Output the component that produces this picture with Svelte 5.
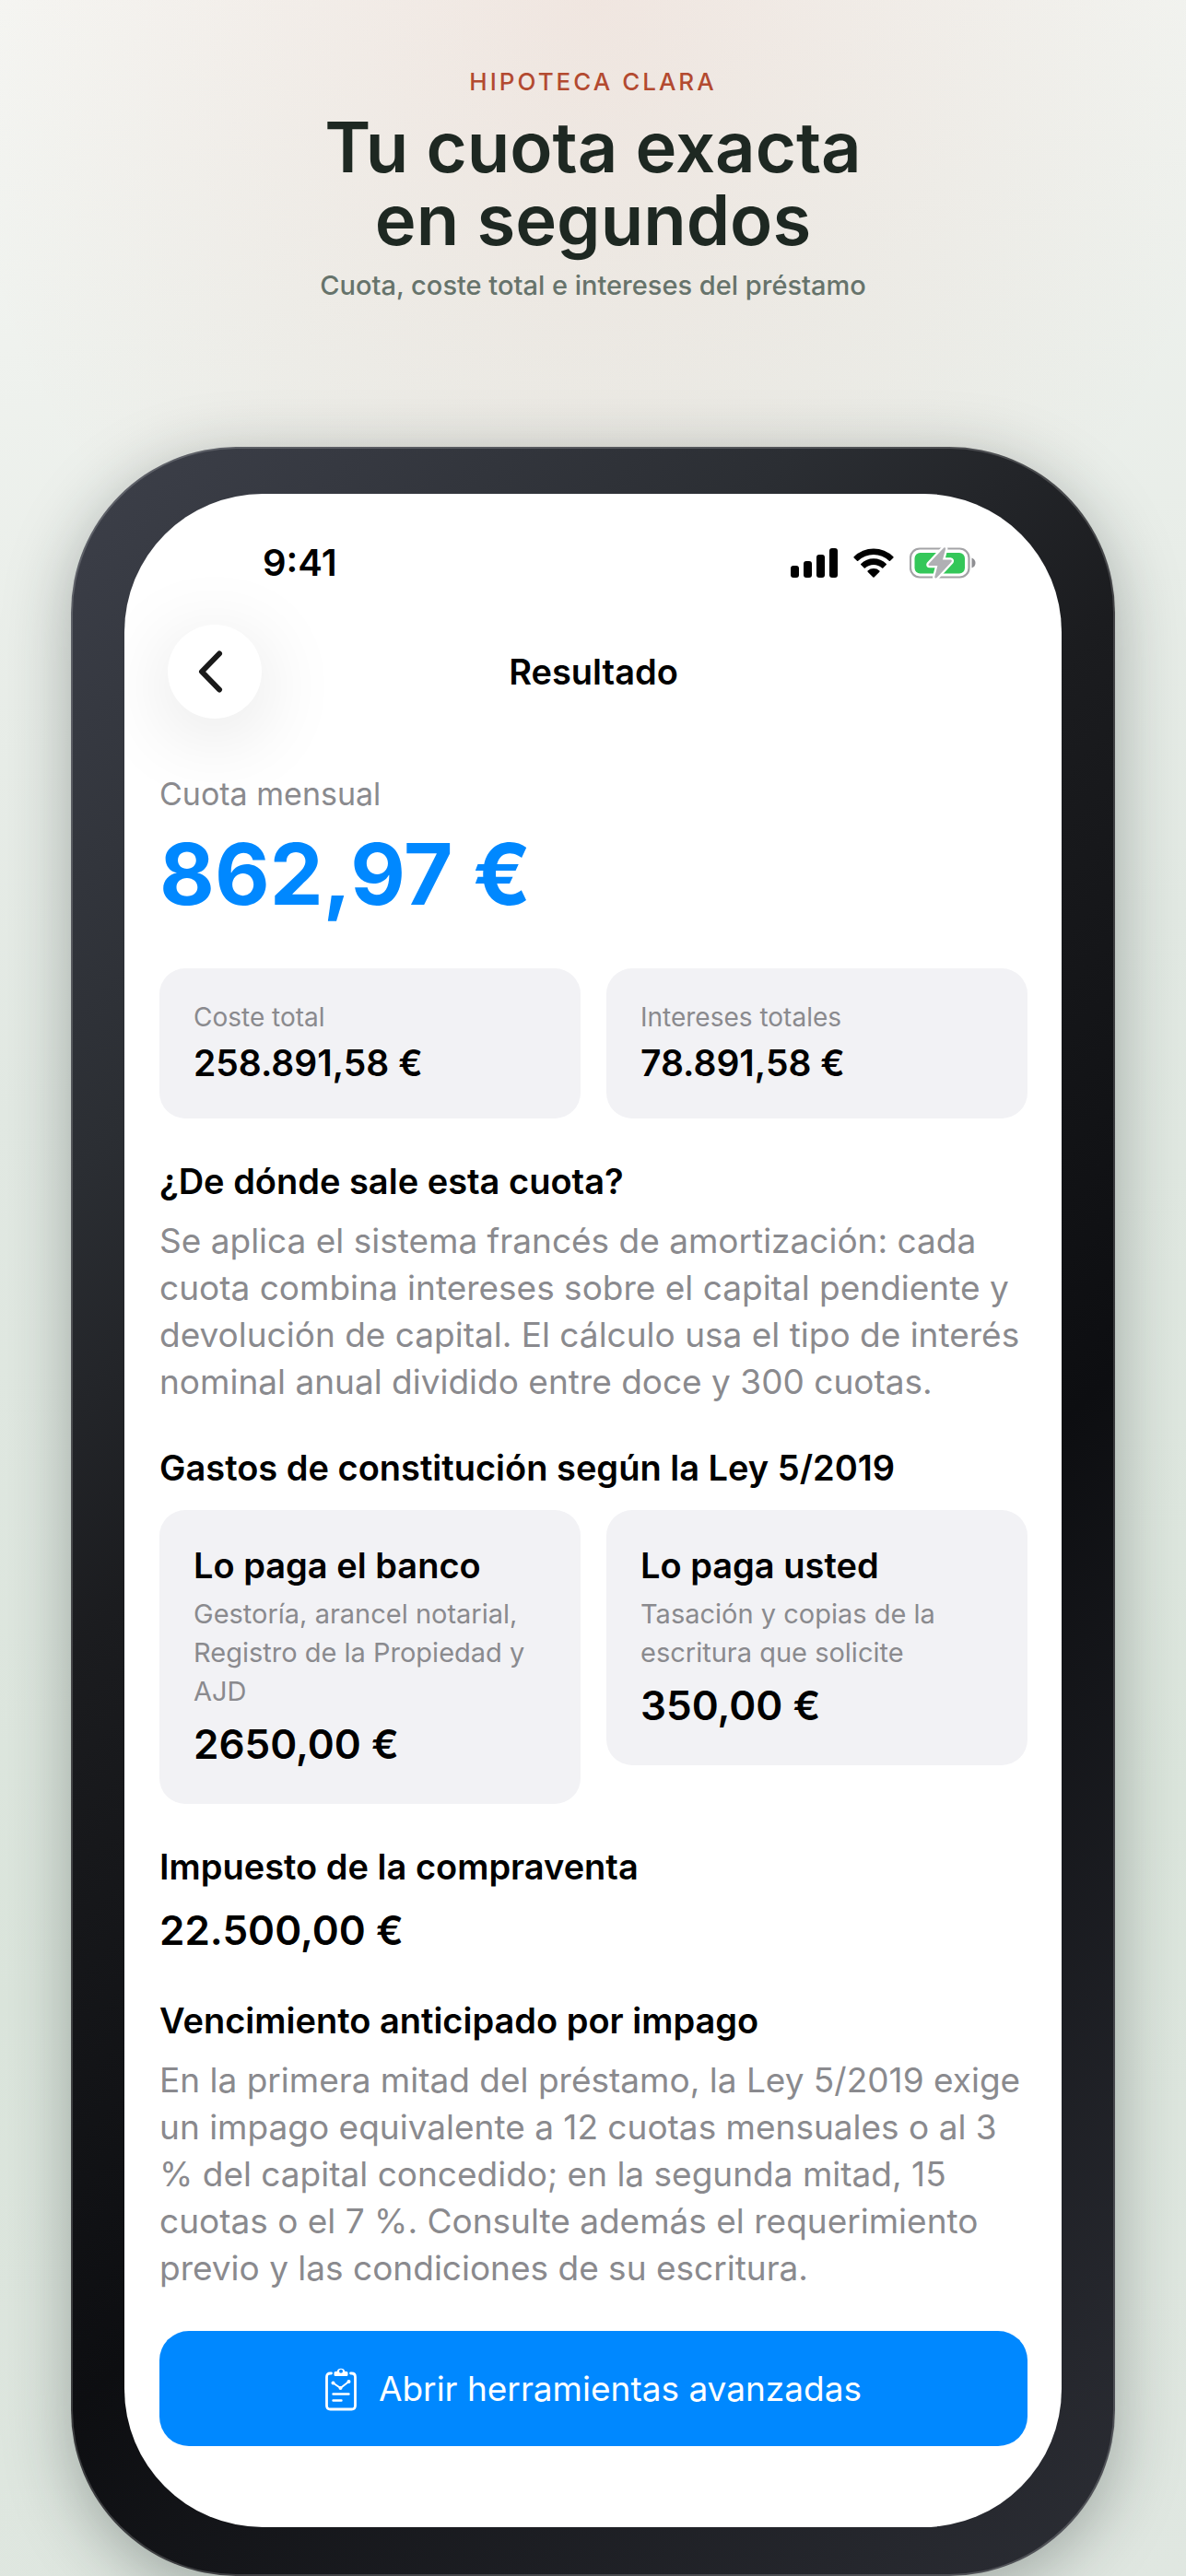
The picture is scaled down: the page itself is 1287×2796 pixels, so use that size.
<script>
  const totals = [
    { label: 'Coste total', value: '258.891,58 €' },
    { label: 'Intereses totales', value: '78.891,58 €' },
  ];
  const costs = [
    {
      title: 'Lo paga el banco',
      detail: 'Gestoría, arancel notarial, Registro de la Propiedad y AJD',
      value: '2650,00 €',
    },
    {
      title: 'Lo paga usted',
      detail: 'Tasación y copias de la escritura que solicite',
      value: '350,00 €',
    },
  ];
</script>

<div class="page">
  <header class="intro">
    <p class="eyebrow">HIPOTECA CLARA</p>
    <h1>Tu cuota exacta<br />en segundos</h1>
    <p class="tagline">Cuota, coste total e intereses del préstamo</p>
  </header>

  <div class="phone">
    <div class="screen">
      <div class="status">
        <span class="time">9:41</span>
        <div class="indicators">
          <svg width="51" height="32" viewBox="0 0 51 32" aria-hidden="true">
            <rect x="0" y="19" width="9" height="13" rx="3" />
            <rect x="14" y="14" width="9" height="18" rx="3" />
            <rect x="28" y="7" width="9" height="25" rx="3" />
            <rect x="42" y="0" width="9" height="32" rx="3" />
          </svg>
          <svg width="44" height="32" viewBox="0 0 44 32" aria-hidden="true">
            <path d="M0.6 9.2 A30.5 30.5 0 0 1 43.4 9.2 Q43.9 9.8 43.4 10.4 L40 13.8 Q39.4 14.3 38.8 13.8 A24.2 24.2 0 0 0 5.2 13.8 Q4.6 14.3 4 13.8 L0.6 10.4 Q0.1 9.8 0.6 9.2Z" />
            <path d="M8.2 16.9 A19.8 19.8 0 0 1 35.8 16.9 Q36.3 17.5 35.8 18.1 L32.3 21.5 Q31.7 22 31.1 21.5 A13.4 13.4 0 0 0 12.9 21.5 Q12.3 22 11.7 21.5 L8.2 18.1 Q7.7 17.5 8.2 16.9Z" />
            <path d="M15.6 24.5 A9.6 9.6 0 0 1 28.4 24.5 Q28.9 25.1 28.4 25.7 L22.6 31.4 Q22 32 21.4 31.4 L15.6 25.7 Q15.1 25.1 15.6 24.5Z" />
          </svg>
          <svg width="72" height="34" viewBox="0 0 72 34" aria-hidden="true">
            <rect x="1" y="1.5" width="63.5" height="31" rx="10" fill="none" stroke="#a3a3a6" stroke-width="2.2" />
            <path d="M67.5 11.5 Q71.5 13 71.5 17 Q71.5 21 67.5 22.5Z" fill="#8e8e92" />
            <rect x="5.5" y="6" width="54.5" height="22.5" rx="6" fill="#34c759" />
            <path d="M37.2 0.5 L20.8 18 Q19.8 20 22 20 L30.4 20 L27.2 32.5 Q27.8 34.4 29.6 33 L45.4 16 Q46.6 13.8 44.4 13.6 L36 13.6 L39.2 1.6 Q38.8 -0.6 37.2 0.5Z" fill="#b0b0b4" stroke="#fff" stroke-width="4.5" paint-order="stroke" stroke-linejoin="round" />
          </svg>
        </div>
      </div>

      <nav>
        <button class="back" aria-label="Atrás">
          <svg width="28" height="46" viewBox="0 0 28 46" aria-hidden="true">
            <path d="M23 3.5 L4 23 L23 42.5" fill="none" stroke="#1a1a1a" stroke-width="6" stroke-linecap="round" stroke-linejoin="round" />
          </svg>
        </button>
        <h2>Resultado</h2>
      </nav>

      <main>
        <section class="hero">
          <p class="caption">Cuota mensual</p>
          <p class="amount">862,97 €</p>
        </section>

        <section class="cards">
          {#each totals as item}
            <div class="card">
              <p class="label">{item.label}</p>
              <p class="strong">{item.value}</p>
            </div>
          {/each}
        </section>

        <section>
          <h3>¿De dónde sale esta cuota?</h3>
          <p class="body">
            Se aplica el sistema francés de amortización: cada cuota combina intereses sobre el capital pendiente y
            devolución de capital. El cálculo usa el tipo de interés nominal anual dividido entre doce y 300 cuotas.
          </p>
        </section>

        <section class="roomy">
          <h3>Gastos de constitución según la Ley 5/2019</h3>
          <div class="cards">
            {#each costs as item}
              <div class="card">
                <h4>{item.title}</h4>
                <p class="detail">{item.detail}</p>
                <p class="money">{item.value}</p>
              </div>
            {/each}
          </div>
        </section>

        <section>
          <h3>Impuesto de la compraventa</h3>
          <p class="money">22.500,00 €</p>
        </section>

        <section>
          <h3>Vencimiento anticipado por impago</h3>
          <p class="body">
            En la primera mitad del préstamo, la Ley 5/2019 exige un impago equivalente a 12 cuotas mensuales o al 3 %
            del capital concedido; en la segunda mitad, 15 cuotas o el 7 %. Consulte además el requerimiento previo y
            las condiciones de su escritura.
          </p>
        </section>

        <button class="primary">
          <svg width="34" height="48" viewBox="0 0 34 48" fill="none" stroke="#fff" stroke-linecap="round" stroke-linejoin="round" aria-hidden="true">
            <path d="M6.5 7 H5.5 Q1.5 7 1.5 11 V42 Q1.5 46 5.5 46 H28.5 Q32.5 46 32.5 42 V11 Q32.5 7 28.5 7 H27.5" stroke-width="2.8" />
            <path fill="#fff" stroke="none" fill-rule="evenodd" d="M9.5 6.5 Q9.5 5 11 5 H12.6 A4.6 4.6 0 0 1 21.4 5 H23 Q24.5 5 24.5 6.5 V8.5 Q24.5 10 23 10 H11 Q9.5 10 9.5 8.5Z M17 2.8 A2 2 0 1 0 17 6.8 A2 2 0 1 0 17 2.8Z" />
            <path d="M8.5 17.5 L16.5 23 L25.5 16" stroke-width="2" />
            <g fill="#fff" stroke="none">
              <circle cx="8.5" cy="17.5" r="2" />
              <circle cx="16.5" cy="23" r="2" />
              <circle cx="25.5" cy="16" r="2" />
            </g>
            <path d="M8.5 29.5 H25.5 M8.5 36.5 H17.5" stroke-width="2.4" />
          </svg>
          <span>Abrir herramientas avanzadas</span>
        </button>
      </main>
    </div>
  </div>
</div>

<style>
  :global(body) {
    margin: 0;
  }

  .page {
    box-sizing: border-box;
    min-height: 100vh;
    padding: 73px 77px 0;
    overflow: hidden;
    font-family: Inter, 'Liberation Sans', sans-serif;
    color: #000;
    background:
      radial-gradient(ellipse 55% 30% at 50% 0, rgba(214, 110, 84, 0.11), rgba(214, 110, 84, 0)),
      linear-gradient(170deg, #f5f6f3, #e2e9e3 40%, #dbe5dc 72%, #e0e7e1);
  }

  h1,
  h2,
  h3,
  h4,
  p {
    margin: 0;
  }

  .intro {
    display: flex;
    flex-direction: column;
    align-items: center;
    margin-bottom: 155px;
    text-align: center;
  }

  .eyebrow {
    margin-bottom: 15px;
    font-size: 26px;
    font-weight: 500;
    line-height: 32px;
    letter-spacing: 3px;
    color: #b34a30;
  }

  h1 {
    margin-bottom: 12px;
    font-size: 76px;
    font-weight: 600;
    line-height: 79px;
    color: #1e2822;
  }

  .tagline {
    font-size: 29px;
    font-weight: 500;
    line-height: 40px;
    color: #66736b;
  }

  .phone {
    padding: 51px 58px 53px;
    border-radius: 180px;
    background: linear-gradient(135deg, #3d404a, #2b2e33 23%, #1b1c1f 38%, #0d0e11 62%, #2c2e35);
    box-shadow:
      inset 0 0 0 2px rgba(255, 255, 255, 0.18),
      0 16px 70px rgba(30, 42, 38, 0.34);
  }

  .screen {
    padding: 51px 37px 88px 38px;
    border-radius: 150px;
    overflow: hidden;
    background: #fff;
  }

  .status {
    display: flex;
    align-items: center;
    justify-content: space-between;
    height: 48px;
    margin-bottom: 43px;
    padding: 0 56px 0 112px;
  }

  .time {
    font-size: 40px;
    font-weight: 600;
    line-height: 48px;
  }

  .indicators {
    display: flex;
    align-items: center;
    gap: 17px;
  }

  nav {
    display: grid;
    grid-template-columns: 1fr auto 1fr;
    align-items: center;
    margin-bottom: 60px;
  }

  .back {
    display: flex;
    align-items: center;
    justify-content: center;
    width: 102px;
    height: 102px;
    margin-left: 9px;
    padding: 0 8px 0 0;
    border: 0;
    border-radius: 50%;
    background: #fff;
    box-shadow: 0 16px 90px rgba(0, 0, 0, 0.12);
  }

  main,
  section {
    display: flex;
    flex-direction: column;
  }

  main {
    gap: 43px;
  }

  section {
    gap: 13px;
  }

  .roomy {
    gap: 20px;
  }

  .hero {
    gap: 8px;
  }

  .caption {
    font-size: 34px;
    line-height: 44px;
    color: #8a8a8e;
  }

  .amount {
    margin-bottom: 2px;
    font-size: 92px;
    font-weight: 700;
    line-height: 114px;
    color: #0088ff;
  }

  .cards {
    display: grid;
    grid-template-columns: 1fr 1fr;
    align-items: start;
    gap: 28px;
  }

  .card {
    display: flex;
    flex-direction: column;
    gap: 6px;
    padding: 35px 37px;
    border-radius: 28px;
    background: #f2f2f5;
  }

  .label {
    font-size: 28px;
    line-height: 36px;
    color: #8a8a8e;
  }

  h2,
  h3,
  h4,
  .strong {
    font-size: 38px;
    font-weight: 600;
    line-height: 51px;
  }

  .strong {
    font-size: 39px;
  }

  .body {
    font-size: 37px;
    line-height: 51px;
    color: #8a8a8e;
  }

  .detail {
    font-size: 29px;
    line-height: 42px;
    color: #8a8a8e;
  }

  .money {
    font-size: 44px;
    font-weight: 600;
    line-height: 60px;
  }

  .primary {
    display: flex;
    align-items: center;
    justify-content: center;
    gap: 24px;
    padding: 37px;
    border: 0;
    border-radius: 32px;
    font-family: inherit;
    font-size: 37px;
    line-height: 51px;
    color: #fff;
    background: #0088ff;
  }
</style>
